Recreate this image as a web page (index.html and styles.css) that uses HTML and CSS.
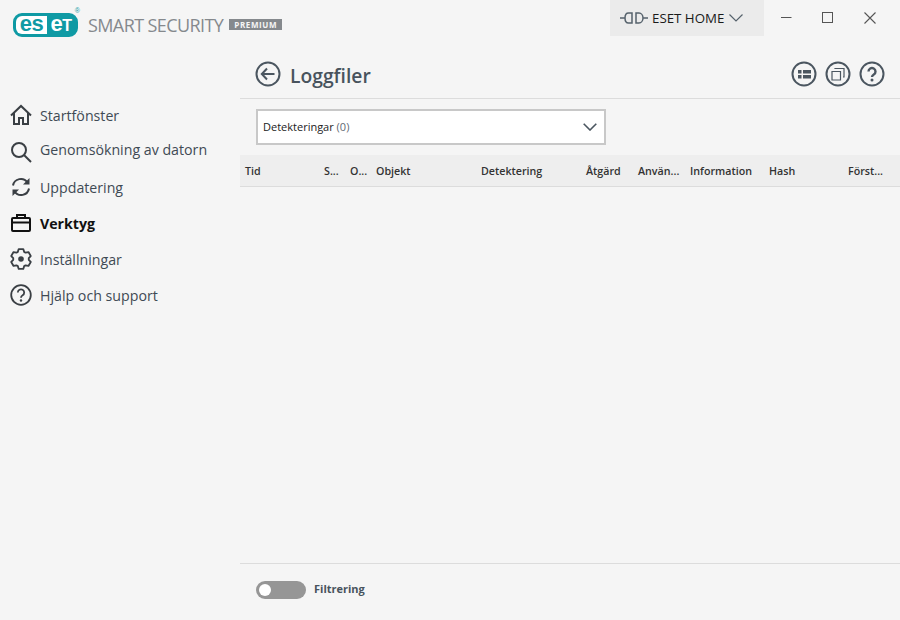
FILE: index.html
```html
<!DOCTYPE html>
<html lang="sv">
<head>
    <meta charset="UTF-8">
    <meta name="viewport" content="width=device-width, initial-scale=1.0">
    <title>ESET Smart Security Premium</title>
    <link rel="stylesheet" href="styles.css">
</head>
<body>
    <div class="app">
        <!-- Title bar -->
        <header class="titlebar">
            <div class="brand">
                <div class="logo">
                    <span class="logo-left">es</span><span class="logo-right">e<span class="logo-t">T</span></span>
                    <span class="logo-reg">®</span>
                </div>
                <span class="product">SMART SECURITY</span>
                <span class="edition">PREMIUM</span>
            </div>
            <div class="home-btn">
                <svg class="plug" width="28" height="14" viewBox="0 0 28 14" fill="none" stroke="#56626c" stroke-width="1.5">
                    <path d="M0 7h5M12 2H8.500C6.500 2 5 4 5 7s1.500 5 3.500 5H12zM16 2h3c2 0 4 2 4 5s-2 5-4 5h-3zM23 7h5"/>
                </svg>
                <span>ESET HOME</span>
                <svg width="14" height="8" viewBox="0 0 14 8" fill="none" stroke="#56626c" stroke-width="1.200">
                    <path d="M.5.500 7 7l6.500-6.500"/>
                </svg>
            </div>
            <div class="win-btns">
                <svg width="12" height="12" viewBox="0 0 12 12" fill="none" stroke="#555" stroke-width="1"><path d="M1 5.500h10.500"/></svg>
                <svg width="12" height="12" viewBox="0 0 12 12" fill="none" stroke="#555" stroke-width="1"><rect x=".5" y=".5" width="10" height="10"/></svg>
                <svg width="12" height="12" viewBox="0 0 12 12" fill="none" stroke="#555" stroke-width="1.100"><path d="M.5.500l11 11M11.500.500l-11 11"/></svg>
            </div>
        </header>

        <div class="columns">
            <!-- Sidebar -->
            <nav class="sidebar">
                <a class="nav-item">
                    <svg class="nav-icon" viewBox="0 0 22 22" fill="none" stroke="#3a3f44" stroke-width="2">
                        <path d="M1 11.500 11 2l10 9.500M4 9v11h5v-6h4v6h5V9"/>
                    </svg>
                    <span>Startfönster</span>
                </a>
                <a class="nav-item nav-search">
                    <svg class="nav-icon" viewBox="0 0 22 22" fill="none" stroke="#3a3f44" stroke-width="2">
                        <circle cx="9" cy="9" r="7"/><path d="m14 14 7 7"/>
                    </svg>
                    <span>Genomsökning av datorn</span>
                </a>
                <a class="nav-item">
                    <svg class="nav-icon" viewBox="0 0 22 22" fill="none" stroke="#3a3f44" stroke-width="2">
                        <path d="M3 9.500A8 8 0 0 1 17.500 6.500M19 12.500A8 8 0 0 1 4.500 15.500"/>
                        <path d="M19.500 2v6.500H13z" fill="#3a3f44" stroke="none"/>
                        <path d="M2.500 20v-6.500H9z" fill="#3a3f44" stroke="none"/>
                    </svg>
                    <span>Uppdatering</span>
                </a>
                <a class="nav-item active">
                    <svg class="nav-icon" viewBox="0 0 22 22" fill="none" stroke="#111" stroke-width="2">
                        <rect x="2" y="6" width="18" height="13" rx="1"/><path d="M2 10.500h18M7 6V3h8v3"/>
                    </svg>
                    <span>Verktyg</span>
                </a>
                <a class="nav-item">
                    <svg class="nav-icon" viewBox="0 0 22 22" fill="none" stroke="#3a3f44" stroke-width="1.800" stroke-linejoin="round">
                        <path d="M7.830 3.870 8.710 1.060h4.580l.88 2.810 1.420.82 2.870-.65 2.290 3.980-2 2.160v1.640l2 2.160-2.290 3.980-2.870-.65-1.420.82-.88 2.810H8.710l-.88-2.810-1.420-.82-2.870.65-2.290-3.980 2-2.160v-1.640l-2-2.160 2.290-3.980 2.870.65z"/>
                        <circle cx="11" cy="11" r="2.800" fill="#3a3f44" stroke="none"/>
                    </svg>
                    <span>Inställningar</span>
                </a>
                <a class="nav-item">
                    <svg class="nav-icon" viewBox="0 0 22 22" fill="none" stroke="#3a3f44" stroke-width="1.800">
                        <circle cx="11" cy="11" r="9.800"/><path d="M7.800 8.500a3.200 3.200 0 1 1 4.800 2.800c-1 .6-1.600 1.200-1.600 2.400"/>
                        <circle cx="11" cy="16.500" r="1.200" fill="#3a3f44" stroke="none"/>
                    </svg>
                    <span>Hjälp och support</span>
                </a>
            </nav>

            <!-- Main content -->
            <main class="content">
                <div class="page-head">
                    <svg class="back" width="26" height="26" viewBox="0 0 26 26" fill="none" stroke="#4b5660" stroke-width="2">
                        <circle cx="13" cy="13" r="11.500"/><path d="M19.500 13H7M12 7.500 6.800 13l5.200 5.500"/>
                    </svg>
                    <h1>Loggfiler</h1>
                    <div class="head-icons">
                        <svg width="26" height="26" viewBox="0 0 26 26" fill="none" stroke="#4b5660" stroke-width="2">
                            <circle cx="13" cy="13" r="11.500"/>
                            <path d="M7 9h3.500v3.500H7zM12 9h8v3.500h-8zM7 14h3.500v3.500H7zM12 14h8v3.500h-8z" fill="#4b5660" stroke="none"/>
                        </svg>
                        <svg width="26" height="26" viewBox="0 0 26 26" fill="none" stroke="#4b5660" stroke-width="2">
                            <circle cx="13" cy="13" r="11.500"/>
                            <path d="M7 10.500h8.500V19H7zM10 8V7.500h9V16h-1" stroke-width="1.200"/>
                        </svg>
                        <svg width="26" height="26" viewBox="0 0 26 26" fill="none" stroke="#4b5660" stroke-width="2">
                            <circle cx="13" cy="13" r="11.500"/>
                            <path d="M9.500 10.500a3.500 3.500 0 1 1 5.300 3c-1.100.7-1.800 1.200-1.800 2.500" stroke-width="2.400"/>
                            <circle cx="13" cy="19" r="1.500" fill="#4b5660" stroke="none"/>
                        </svg>
                    </div>
                </div>

                <div class="select-row">
                    <div class="select">
                        <span class="select-text">Detekteringar <span class="count">(0)</span></span>
                        <svg width="14" height="8" viewBox="0 0 14 8" fill="none" stroke="#4b5660" stroke-width="1.600">
                            <path d="M.7.700 7 7l6.300-6.300"/>
                        </svg>
                    </div>
                </div>

                <div class="table-head">
                    <span>Tid</span>
                    <span>S...</span>
                    <span>O...</span>
                    <span>Objekt</span>
                    <span>Detektering</span>
                    <span>Åtgärd</span>
                    <span>Använ...</span>
                    <span>Information</span>
                    <span>Hash</span>
                    <span>Först...</span>
                </div>

                <div class="table-body"></div>

                <div class="footer">
                    <div class="toggle"><span class="knob"></span></div>
                    <span class="toggle-label">Filtrering</span>
                </div>
            </main>
        </div>
    </div>
</body>
</html>
```

FILE: styles.css
```css
* {
    box-sizing: border-box;
}

body {
    margin: 0;
    padding: 0;
    background-color: #f5f5f5;
    color: #333;
    font-family: "Open Sans", "Noto Sans", Arial, sans-serif;
}

.app {
    width: 900px;
    height: 620px;
    display: flex;
    flex-direction: column;
    overflow: hidden;
}

/* Title bar */
.titlebar {
    height: 36px;
    flex: none;
    display: flex;
    align-items: flex-start;
}

.brand {
    width: 610px;
    height: 36px;
    padding: 7px 0 0 13px;
    display: flex;
    align-items: flex-start;
}

.logo {
    width: 65px;
    height: 24px;
    margin-top: 6px;
    position: relative;
    display: flex;
    background: #0f9aa4;
    border: 3px solid #0f9aa4;
    border-radius: 9px;
    font-family: "Liberation Sans", Arial, sans-serif;
    font-weight: 700;
    font-size: 22px;
    line-height: 16px;
}

.logo-left {
    width: 31px;
    background: #fff;
    color: #0f9aa4;
    border-radius: 6px 0 0 6px;
    text-align: center;
    letter-spacing: -0.5px;
}

.logo-right {
    flex: 1;
    color: #fff;
    text-align: center;
    letter-spacing: -0.5px;
}

.logo-t {
    font-size: 16px;
}

.logo-reg {
    position: absolute;
    top: -9px;
    right: -5px;
    font-size: 7px;
    line-height: 8px;
    font-weight: 400;
    color: #0f9aa4;
}

.product {
    margin-left: 10px;
    margin-top: 7px;
    font-size: 18px;
    line-height: 22px;
    letter-spacing: -0.6px;
    color: #85898d;
}

.edition {
    margin-left: 6px;
    margin-top: 12px;
    width: 53px;
    height: 11px;
    background: #85898d;
    color: #f5f5f5;
    font-size: 8px;
    font-weight: 700;
    line-height: 11px;
    text-align: center;
    letter-spacing: 0.6px;
}

.home-btn {
    width: 154px;
    height: 36px;
    padding-left: 10px;
    display: flex;
    align-items: center;
    background: #ebebeb;
    color: #1a1a1a;
    font-size: 13.3px;
}

.home-btn .plug {
    margin-right: 4px;
}

.home-btn span {
    margin-right: 5px;
}

.win-btns {
    flex: 1;
    display: flex;
    justify-content: space-between;
    padding: 12px 24px 0 16px;
}

/* Sidebar */
.columns {
    flex: 1;
    display: flex;
    min-height: 0;
}

.sidebar {
    width: 240px;
    flex: none;
    padding: 61px 0 0 10px;
}

.nav-item {
    height: 36px;
    display: flex;
    align-items: center;
    font-size: 14.2px;
    color: #3f4a54;
}

.nav-search span {
    margin-bottom: 4px;
}

.nav-search .nav-icon {
    margin-top: 2px;
}

.nav-icon {
    width: 22px;
    height: 22px;
    margin-right: 8px;
    flex: none;
}

.nav-item.active {
    font-weight: 700;
    color: #111;
}

/* Main */
.content {
    flex: 1;
    display: flex;
    flex-direction: column;
    min-width: 0;
}

.page-head {
    height: 63px;
    padding: 0 15px 5px 15px;
    display: flex;
    align-items: flex-end;
    border-bottom: 1px solid #dcdcdc;
}

.back {
    margin-right: 9px;
    margin-bottom: 6px;
}

h1 {
    margin: 0 0 3px;
    font-size: 19.3px;
    line-height: 28px;
    font-weight: 600;
    color: #48535d;
}

.head-icons {
    margin-left: auto;
    margin-bottom: 6px;
    display: flex;
    gap: 8px;
}

.select-row {
    padding: 10px 16px;
}

.select {
    width: 350px;
    height: 36px;
    padding: 0 7px 0 5px;
    display: flex;
    align-items: center;
    justify-content: space-between;
    background: #fff;
    border: 2px solid #c8c8c8;
    font-size: 11px;
    color: #222;
}

.select-text {
    margin-bottom: 2px;
}

.count {
    color: #5f6a74;
}

.table-head {
    height: 32px;
    flex: none;
    padding-left: 5px;
    display: grid;
    grid-template-columns: 79px 26px 26px 105px 105px 52px 52px 79px 79px 1fr;
    align-items: center;
    background: #eeeeee;
    border-bottom: 1px solid #dcdcdc;
    font-size: 10.7px;
    font-weight: 600;
    color: #333;
}

.table-body {
    flex: 1;
}

.footer {
    height: 57px;
    flex: none;
    padding: 17px 16px 0;
    display: flex;
    align-items: flex-start;
    gap: 8px;
    border-top: 1px solid #dcdcdc;
}

.toggle {
    width: 50px;
    height: 18px;
    padding: 3px;
    background: #969696;
    border-radius: 9px;
}

.knob {
    display: block;
    width: 12px;
    height: 12px;
    background: #fff;
    border-radius: 50%;
}

.toggle-label {
    font-size: 11px;
    font-weight: 700;
    line-height: 15px;
    color: #48535d;
}
```
